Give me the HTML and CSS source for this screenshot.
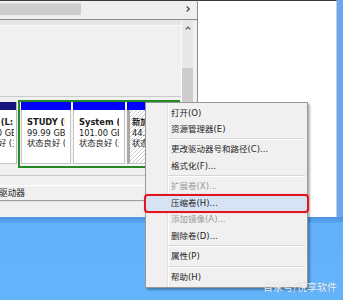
FILE: index.html
```html
<!DOCTYPE html>
<html lang="zh-CN">
<head>
  <meta charset="UTF-8" />
  <meta name="viewport" content="width=device-width, initial-scale=1.0"/>
  <title>磁盘管理</title>
  <link rel="stylesheet" href="styles.css">
</head>
<body>
  <div class="screen">
    <div class="windows">
      <!-- Disk Management window -->
      <div class="dm">
        <div class="hscroll">
          <div class="hthumb"></div>
          <div class="hspace"></div>
          <div class="harrow">
            <svg width="4" height="6" viewBox="0 0 4 6"><path d="M0.6 0.6 L3.2 3 L0.6 5.4" fill="none" stroke="#555" stroke-width="1.3"/></svg>
          </div>
        </div>
        <div class="split"></div>

        <div class="panes">
          <div class="graph">
            <div class="above"></div>

            <div class="disk">
              <div class="part primary">
                <div class="bar"></div>
                <div class="body">
                  <div class="clip">
                    <div class="shift">
                      <div class="name">新加卷 (L:)</div>
                      <div>100.00 GB</div>
                      <div>状态良好 (主分区)</div>
                    </div>
                  </div>
                </div>
              </div>

              <div class="extended">
                <div class="part logical study">
                  <div class="bar"></div>
                  <div class="body">
                    <div class="clip">
                      <div class="name">STUDY (K:)</div>
                      <div>99.99 GB</div>
                      <div>状态良好 (逻辑驱动器)</div>
                    </div>
                  </div>
                </div>
                <div class="part logical system">
                  <div class="bar"></div>
                  <div class="body">
                    <div class="clip">
                      <div class="name">System (C:)</div>
                      <div>101.00 GB</div>
                      <div>状态良好 (逻辑驱动器)</div>
                    </div>
                  </div>
                </div>
                <div class="part logical selected">
                  <div class="bar"></div>
                  <div class="body">
                    <div class="clip">
                      <div class="name">新加卷 (G:)</div>
                      <div>44.51 GB</div>
                      <div>状态良好 (逻辑驱动器)</div>
                    </div>
                  </div>
                </div>
              </div>
            </div>

            <div class="below"></div>
          </div>

          <div class="vscroll">
            <div class="varrow">
              <svg width="6" height="4" viewBox="0 0 6 4"><path d="M0.7 3.3 L3 1 L5.3 3.3" fill="none" stroke="#555" stroke-width="1.2"/></svg>
            </div>
            <div class="vtrack"></div>
            <div class="vthumb"></div>
          </div>
        </div>

        <div class="legend"><span>逻辑驱动器</span></div>
        <div class="status"></div>
      </div>

      <!-- window behind, on the right -->
      <div class="explorer"></div>
      <div class="frame"></div>
    </div>
    <div class="band"></div>

    <!-- context menu -->
    <ul class="menu">
      <li class="item">打开(O)</li>
      <li class="item">资源管理器(E)</li>
      <li class="sep"></li>
      <li class="item">更改驱动器号和路径(C)...</li>
      <li class="item">格式化(F)...</li>
      <li class="sep"></li>
      <li class="item off">扩展卷(X)...</li>
      <li class="item hot">压缩卷(H)...</li>
      <li class="item off">添加镜像(A)...</li>
      <li class="item">删除卷(D)...</li>
      <li class="sep"></li>
      <li class="item">属性(P)</li>
      <li class="sep"></li>
      <li class="item">帮助(H)</li>
    </ul>

    <div class="callout"></div>
    <div class="watermark">百家号/悦享软件</div>
  </div>
</body>
</html>
```

FILE: styles.css
```css
body {
  margin: 0;
  font-family: "DejaVu Sans", "Noto Sans CJK SC", sans-serif;
  color: #1a1a1a;
}

.screen {
  position: relative;
  width: 343px;
  height: 300px;
  overflow: hidden;
  background: linear-gradient(to bottom, #58a9f4, #63b4fb);
}

.windows {
  display: flex;
  height: 217px;
}

/* ---------- disk management ---------- */
.dm {
  width: 197px;
  border-top: 1px solid #3a3a3a;
  border-right: 1px solid #8e8e8e;
  background: #f0f0f0;
  display: flex;
  flex-direction: column;
}

.hscroll {
  display: flex;
  height: 18px;
  background: #efefef;
}

.hthumb {
  width: 81px;
  height: 12px;
  margin-top: 2px;
  background: #cdcdcd;
  border-top: 1px solid #d9d9d9;
  box-sizing: border-box;
}

.hspace {
  flex: 1;
}

.harrow {
  width: 11px;
  margin-right: 4px;
  display: flex;
  align-items: center;
  justify-content: center;
  padding-bottom: 2px;
}

.split {
  height: 1px;
  border-top: 1px solid #8c8c8c;
  background: #e4e4e4;
}

.panes {
  display: flex;
  height: 164px;
}

.graph {
  flex: 1;
  display: flex;
  flex-direction: column;
}

.above {
  height: 75px;
  border-bottom: 1px solid #cacaca;
  background: linear-gradient(to bottom, #e6e6e6 0 4px, #fafafa 4px 5px, #f0f0f0 5px);
}

.disk {
  display: flex;
  align-items: flex-start;
  height: 75px;
  padding-top: 3px;
  border-bottom: 1px solid #c8c8c8;
}

.below {
  flex: 1;
}

.part {
  display: flex;
  flex-direction: column;
}

.part .bar {
  height: 8px;
}

.part .body {
  height: 54px;
  box-sizing: border-box;
  padding: 7px 5px 0 5px;
  background: #fff;
  border: 1px solid #c4c4c4;
  border-top: none;
  font-size: 8.3px;
  line-height: 10.5px;
  white-space: nowrap;
}

.part .name {
  font-weight: bold;
}

.clip {
  overflow: hidden;
}

.primary {
  width: 17px;
  margin: 2px 1px 0 0;
}

.primary .bar {
  background: #14147e;
  border-right: 1px solid #b4b4b4;
}

.primary .body {
  border-left: none;
  border-right: 1px solid #b4b4b4;
  padding: 7px 2px 0 0;
}

.primary .shift {
  margin-left: -27px;
}

.extended {
  width: 162px;
  height: 68px;
  box-sizing: border-box;
  border: 2px solid #238a23;
  background: #f6f6f6;
  display: flex;
  gap: 2px;
  padding: 0 1px 2px 1px;
}

.logical .bar {
  background: #0000f8;
}

.study {
  width: 50px;
}

.system {
  width: 52px;
}

.selected {
  flex: 1;
}

.selected .body {
  border-left: 3px solid #a8a8a8;
  padding-left: 2px;
  background: repeating-linear-gradient(135deg, #fff 0 1.9px, #cbcbcb 1.9px 2.8px);
}

.vscroll {
  width: 11px;
  margin-right: 4px;
  border-left: 1px solid #fbfbfb;
  background: #e8e8e8;
  display: flex;
  flex-direction: column;
}

.varrow {
  height: 14px;
  display: flex;
  align-items: center;
  justify-content: center;
}

.vtrack {
  height: 33px;
}

.vthumb {
  flex: 1;
  background: #cdcdcd;
}

.legend {
  height: 14px;
  border-top: 1px solid #fff;
  border-bottom: 1px solid #a0a0a0;
  font-size: 8.7px;
  line-height: 14px;
  white-space: nowrap;
  overflow: hidden;
}

.legend span {
  margin-left: -18.4px;
}

.status {
  flex: 1;
  border-top: 1px solid #e2e2e2;
}

/* ---------- other windows ---------- */
.explorer {
  width: 138px;
  background: #fff;
  border-top: 1px solid #3a3a3a;
  border-right: 1px solid #cdcdcd;
}

.frame {
  flex: 1;
  background: #6aa7ee;
}

.band {
  height: 6px;
  background: linear-gradient(to bottom, #4b93de, #57a6f1);
}

/* ---------- context menu ---------- */
.menu {
  position: absolute;
  left: 145px;
  top: 101.5px;
  width: 163px;
  box-sizing: border-box;
  margin: 0;
  padding: 2px 0;
  list-style: none;
  border: 1px solid #979797;
  background-color: #f0f0f0;
  background-image: linear-gradient(to right, transparent 21px, #e2e3e3 21px 22px, #fff 22px 23px, transparent 23px);
  box-shadow: 2px 2px 2px rgba(0, 0, 0, 0.3);
  font-size: 8.5px;
  color: #1e1e1e;
}

.item {
  height: 16.4px;
  line-height: 16.4px;
  padding-left: 25px;
  white-space: nowrap;
}

.item.off {
  color: #9a9a9a;
}

.item.hot {
  background: #d5e3f4;
}

.sep {
  height: 1px;
  margin: 1.1px 2px 1.1px 22px;
  background: #d7d7d7;
  border-bottom: 1px solid #fff;
}

.callout {
  position: absolute;
  left: 144px;
  top: 194.3px;
  width: 165px;
  height: 18.3px;
  box-sizing: border-box;
  border: 2px solid #e3141b;
  border-radius: 4px;
  box-shadow: 0 0 1px rgba(227, 20, 27, 0.6);
}

.watermark {
  position: absolute;
  right: 6px;
  top: 280px;
  font-family: "Noto Sans CJK SC", sans-serif;
  font-size: 10px;
  line-height: 14px;
  color: rgba(255, 255, 255, 0.92);
  text-shadow: 0 0 1px rgba(0, 0, 0, 0.25);
}
```
